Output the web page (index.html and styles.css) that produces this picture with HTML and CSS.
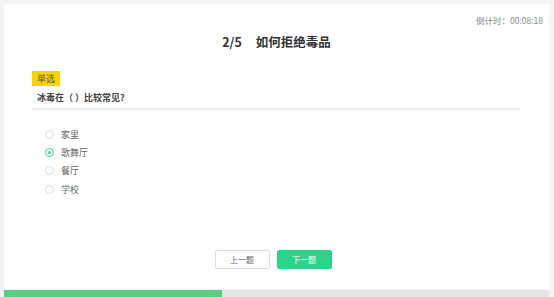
FILE: index.html
```html
<!DOCTYPE html>
<html lang="zh-CN">

<head>
    <meta charset="UTF-8">
    <meta name="viewport" content="width=device-width, initial-scale=1.0">
    <title>答题</title>
    <link rel="stylesheet" href="styles.css">
</head>

<body>
    <div class="page">
        <div class="card">
            <div class="timer">倒计时：00:08:18</div>
            <h2 class="title"><span class="num">2/5</span>如何拒绝毒品</h2>

            <div class="question">
                <span class="tag">单选</span>
                <p class="stem">冰毒在（&nbsp;）比较常见?</p>
            </div>

            <ul class="options">
                <li><span class="radio"></span>家里</li>
                <li><span class="radio checked"></span>歌舞厅</li>
                <li><span class="radio"></span>餐厅</li>
                <li><span class="radio"></span>学校</li>
            </ul>

            <div class="actions">
                <button class="btn">上一题</button>
                <button class="btn primary">下一题</button>
            </div>
        </div>

        <div class="progress">
            <div class="bar" style="width: 40%"></div>
        </div>
    </div>
</body>

</html>
```

FILE: styles.css
```css
body {
    font-family: "Noto Sans CJK SC", "Noto Sans", sans-serif;
    margin: 0;
    background: #f3f4f6;
    color: #333;
}

.page {
    padding: 4px 5px 0 4px;
    height: 293px;
    display: flex;
    flex-direction: column;
}

.card {
    flex: 1;
    background: #fff;
    position: relative;
    padding: 0 28px;
    display: flex;
    flex-direction: column;
}

.timer {
    text-align: right;
    font-size: 8.5px;
    color: #888;
    margin-top: 10px;
    margin-right: -22px;
    line-height: 12px;
}

.title {
    text-align: center;
    font-size: 12.5px;
    font-weight: bold;
    margin: 6px 0 0;
    line-height: 20px;
    color: #333;
}

.num {
    margin-right: 14px;
}

.question {
    margin-top: 11px;
    border-bottom: 2px solid #ececec;
    padding-bottom: 3px;
    margin-right: 1px;
}

.tag {
    display: inline-block;
    background: #f7d500;
    color: #555;
    font-size: 9px;
    line-height: 15px;
    padding: 0 5px;
}

.stem {
    margin: 4px 0 0 5px;
    font-size: 9px;
    line-height: 14px;
    font-weight: bold;
    color: #444;
}

.options {
    list-style: none;
    margin: 15px 0 0;
    padding: 0 0 0 13px;
}

.options li {
    display: flex;
    align-items: center;
    font-size: 9px;
    color: #666;
    height: 18.3px;
}

.radio {
    width: 7px;
    height: 7px;
    border: 1px solid #ddd;
    border-radius: 50%;
    margin-right: 7px;
    position: relative;
}

.radio.checked {
    border-color: #3ecf8e;
}

.radio.checked::after {
    content: "";
    position: absolute;
    left: 2px;
    top: 2px;
    width: 3px;
    height: 3px;
    border-radius: 50%;
    background: #3ecf8e;
}

.actions {
    margin-top: auto;
    margin-bottom: 20px;
    padding-right: 7px;
    display: flex;
    justify-content: center;
    gap: 7px;
}

.btn {
    width: 55px;
    height: 19px;
    font-size: 8px;
    font-family: inherit;
    border: 1px solid #ddd;
    border-radius: 2px;
    background: #fff;
    color: #666;
    padding: 0;
}

.btn.primary {
    background: #2dd38a;
    border-color: #2dd38a;
    color: #fff;
}

.progress {
    height: 7px;
    margin-top: 1px;
    background: #e5e5e5;
}

.bar {
    height: 100%;
    background: #5ccb84;
}
```
